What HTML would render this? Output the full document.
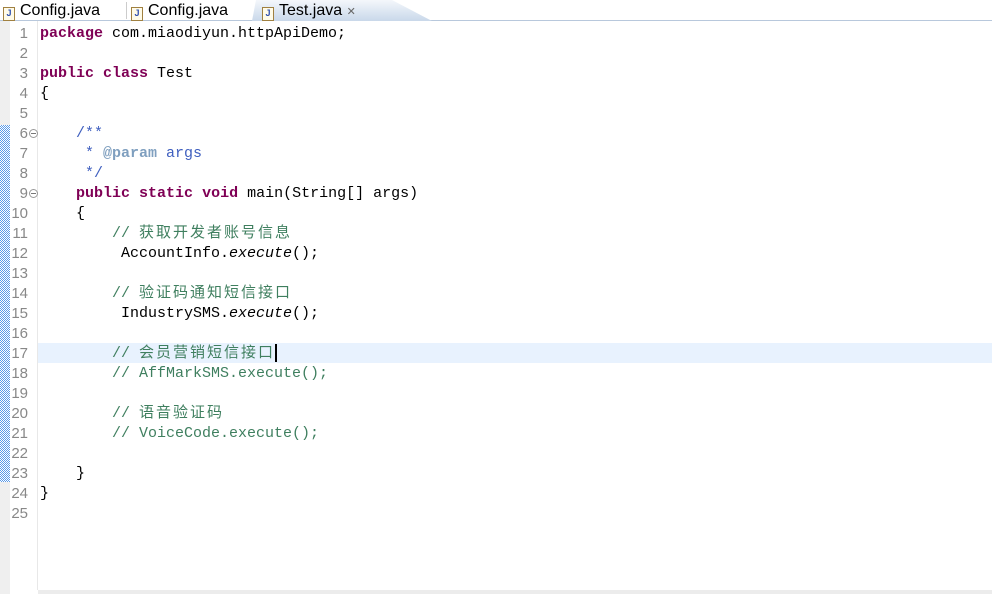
<!DOCTYPE html>
<html><head><meta charset="utf-8"><style>
body{margin:0;width:992px;height:594px;background:#fff;position:relative;overflow:hidden;font-family:"Liberation Sans","Noto Sans CJK SC",sans-serif}
.tabs{position:absolute;left:0;top:0;width:992px;height:20px;background:#fff;border-bottom:1px solid #b8c8dc}
.tab{position:absolute;top:1px;height:20px;font-size:16px;line-height:20px;color:#000}
.ic{display:inline-block;width:10px;height:12px;border:1px solid #a08040;background:#fffbe8;vertical-align:-1px;margin-right:5px;font-size:9px;line-height:11px;text-align:center;color:#3050b0;font-weight:bold}
.act{position:absolute;left:252px;top:0;width:180px;height:21px;background:linear-gradient(#f4f7fb,#c9d8ea);clip-path:polygon(0 100%,4px 0,140px 0,180px 100%)}
.ruler{position:absolute;left:0;top:21px;width:10px;height:573px;background:#efefef}
.chk{position:absolute;left:0;top:125px;width:10px;height:357px;background-image:repeating-conic-gradient(#5a9ae8 0 25%,#fff 0 50%);background-size:2px 2px}
.gut{position:absolute;left:10px;top:21px;width:27px;height:569px;background:#fff;border-right:1px solid #e8e8e8}
.ln{position:absolute;left:0;width:28px;text-align:right;font-family:"Liberation Sans",sans-serif;font-size:15px;color:#888;line-height:20px}
.code{position:absolute;left:40px;font-family:"Liberation Mono","Noto Sans CJK SC",monospace;font-size:15px;line-height:20px;white-space:pre;color:#000}
.k{color:#7f0055;font-weight:bold}.c{color:#3f7f5f}.j{color:#3f5fbf}.p{color:#7f9fbf;font-weight:bold}.i{font-style:italic}
.z{letter-spacing:2px}
.hl{position:absolute;left:38px;top:343px;width:954px;height:20px;background:#e8f2fe}
.fold{position:absolute;left:29px;width:7px;height:7px;border:1px solid #999;border-radius:50%;font-size:0}
.fold:after{content:"";position:absolute;left:1px;top:3px;width:5px;height:1px;background:#777}
.bot{position:absolute;left:38px;top:590px;width:954px;height:4px;background:#ececec}
.caret{position:absolute;left:275px;top:344px;width:2px;height:18px;background:#000}
</style></head><body>
<div class="tabs"></div>
<div class="act"></div>
<div class="tab" style="left:3px"><span class="ic">J</span>Config.java</div>
<div style="position:absolute;left:126px;top:2px;width:1px;height:17px;background:#ccc"></div>
<div class="tab" style="left:131px"><span class="ic">J</span>Config.java</div>
<div class="tab" style="left:262px"><span class="ic">J</span>Test.java <span style="font-size:11px;color:#666">✕</span></div>
<div class="ruler"></div><div class="chk"></div>
<div class="gut"></div>
<div class="hl"></div>
<div class="fold" style="top:129px"></div><div class="fold" style="top:189px"></div>
<div style="position:absolute;left:0;top:24px">
<div class="ln" style="top:0">1</div><div class="ln" style="top:20px">2</div><div class="ln" style="top:40px">3</div><div class="ln" style="top:60px">4</div><div class="ln" style="top:80px">5</div><div class="ln" style="top:100px">6</div><div class="ln" style="top:120px">7</div><div class="ln" style="top:140px">8</div><div class="ln" style="top:160px">9</div><div class="ln" style="top:180px">10</div><div class="ln" style="top:200px">11</div><div class="ln" style="top:220px">12</div><div class="ln" style="top:240px">13</div><div class="ln" style="top:260px">14</div><div class="ln" style="top:280px">15</div><div class="ln" style="top:300px">16</div><div class="ln" style="top:320px">17</div><div class="ln" style="top:340px">18</div><div class="ln" style="top:360px">19</div><div class="ln" style="top:380px">20</div><div class="ln" style="top:400px">21</div><div class="ln" style="top:420px">22</div><div class="ln" style="top:440px">23</div><div class="ln" style="top:460px">24</div><div class="ln" style="top:480px">25</div>
</div>
<div class="code" style="top:24px"><span class="k">package</span> com.miaodiyun.httpApiDemo;

<span class="k">public</span> <span class="k">class</span> Test
{

    <span class="j">/**</span>
<span class="j">     * </span><span class="p">@param</span><span class="j"> args</span>
<span class="j">     */</span>
    <span class="k">public</span> <span class="k">static</span> <span class="k">void</span> main(String[] args)
    {
        <span class="c">// <span class="z">获取开发者账号信息</span></span>
         AccountInfo.<span class="i">execute</span>();

        <span class="c">// <span class="z">验证码通知短信接口</span></span>
         IndustrySMS.<span class="i">execute</span>();

        <span class="c">// <span class="z">会员营销短信接口</span></span>
        <span class="c">// AffMarkSMS.execute();</span>

        <span class="c">// <span class="z">语音验证码</span></span>
        <span class="c">// VoiceCode.execute();</span>

    }
}
</div>
<div class="caret"></div>
<div class="bot"></div>
</body></html>
